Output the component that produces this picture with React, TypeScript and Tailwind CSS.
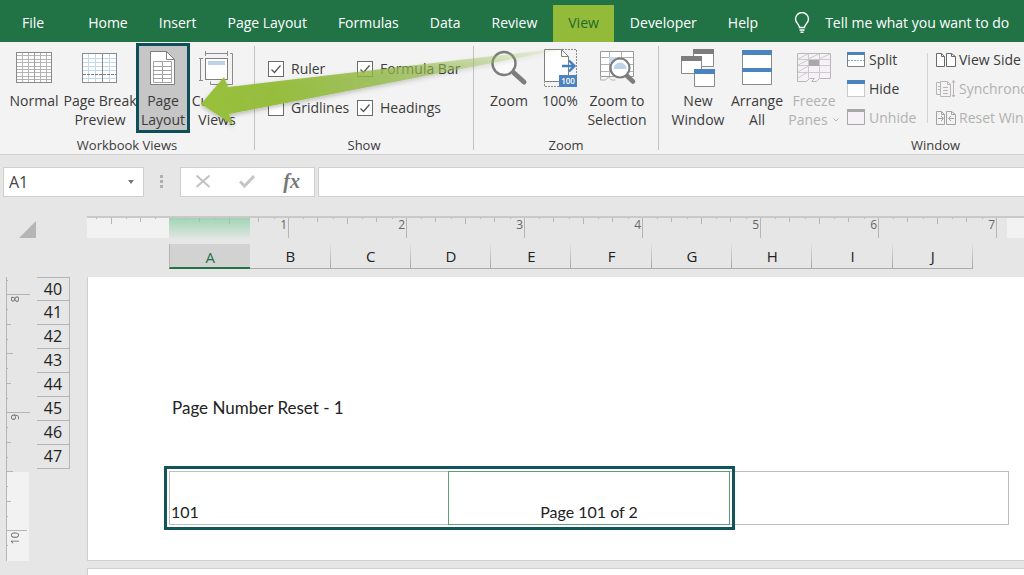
import React from 'react';

const tabs = ['File', 'Home', 'Insert', 'Page Layout', 'Formulas', 'Data', 'Review', 'View', 'Developer', 'Help'];
const columns = ['A', 'B', 'C', 'D', 'E', 'F', 'G', 'H', 'I', 'J'];
const rows = [40, 41, 42, 43, 44, 45, 46, 47];
const inches = [1, 2, 3, 4, 5, 6, 7];

const Icon = ({ children }: { children: React.ReactNode }) => (
  <svg viewBox="0 0 40 40" className="h-10 w-10 shrink-0" fill="none" aria-hidden="true">
    {children}
  </svg>
);

const NormalIcon = () => (
  <Icon>
    <rect x="2.5" y="4.5" width="35" height="30" fill="#fff" stroke="#8a8a8a" />
    <path
      d="M8.5 5v29M14.5 5v29M26.5 5v29M32.5 5v29M3 7.5h34M3 11.5h34M3 14.5h34M3 18.5h34M3 21.5h34M3 24.5h34M3 28.5h34M3 31.5h34"
      stroke="#b4b4b4"
    />
    <path d="M20.5 5v29" stroke="#a0a0a0" />
  </Icon>
);

const PageBreakIcon = () => (
  <Icon>
    <rect x="2.5" y="5.5" width="34" height="29" fill="#fff" stroke="#8a8a8a" />
    <path d="M8.5 6v28M15.5 6v28M29.5 6v28M3 10.5h33M3 14.5h33M3 18.5h33M3 22.5h33M3 30.5h33" stroke="#c3d8ea" />
    <path d="M22.5 6v28" stroke="#8a8a8a" />
    <path d="M3 26.5h33" stroke="#7d7d7d" strokeDasharray="3 1" />
  </Icon>
);

const PageLayoutIcon = () => (
  <Icon>
    <path d="M7.5 3.5h16l8 8v25h-24z" fill="#fff" stroke="#808080" />
    <path d="M23.5 3.5v8h8" stroke="#808080" />
    <path
      d="M10.5 13.5h18v21h-18zM19.5 13.5v21M10.5 18.5h18M10.5 22.5h18M10.5 26.5h18M10.5 30.5h18"
      stroke="#a3a3a3"
    />
  </Icon>
);

const CustomViewsIcon = () => (
  <Icon>
    <path d="M8 5.5h23M8.5 3v5M30.5 3v5M2 10.5h4M2 32.5h4M3.500 11v21M33 5.500h2.500v31h-22v-3" stroke="#8a8a8a" />
    <rect x="8.5" y="10.5" width="22" height="21" fill="#fff" stroke="#808080" />
    <rect x="11" y="13" width="17" height="4" fill="#bdd3e8" />
  </Icon>
);

const ZoomIcon = () => (
  <Icon>
    <path d="M25 25l10 9" stroke="#7d7d7d" strokeWidth="5" strokeLinecap="round" />
    <circle cx="15" cy="15.500" r="11.500" fill="#fafafa" stroke="#7d7d7d" strokeWidth="2.400" />
  </Icon>
);

const HundredIcon = () => (
  <Icon>
    <path d="M22 1.500h14.500v37H4.500V34" stroke="#8a8a8a" strokeDasharray="2 1" />
    <path d="M4.500 1.500h17l7 7v25h-24z" fill="#fff" stroke="#808080" />
    <path d="M21.500 1.500v7h7" stroke="#808080" />
    <path d="M22 18h12M29 12.500l5.500 5.500-5.500 5.500" stroke="#3f7fc0" strokeWidth="2.400" />
    <rect x="19" y="27" width="18" height="12" fill="#4a83bd" />
    <text x="28" y="36" fontSize="8" fontWeight="600" fill="#fff" textAnchor="middle">100</text>
  </Icon>
);

const ZoomSelectionIcon = () => (
  <Icon>
    <path d="M3.500 3.500h33v25h-33z" fill="#fff" stroke="#9a9a9a" />
    <path d="M12.500 4v24M24.500 4v24M4 9.500h32M4 16.500h32M4 23.500h32M3.500 28v4h5l3-3 3 3h4" stroke="#b0b0b0" />
    <path d="M12 9h8v6h-8z" fill="#c9dbec" />
    <path d="M29 27l7 6.500" stroke="#7d7d7d" strokeWidth="4.500" strokeLinecap="round" />
    <circle cx="23" cy="20" r="9.500" fill="#fff" stroke="#7d7d7d" strokeWidth="2.200" />
    <path d="M16.500 21a6.500 6.500 0 0 1 13 0z" fill="#bdd3e8" />
  </Icon>
);

const NewWindowIcon = () => (
  <Icon>
    <path d="M15.500 1.500h20v17h-20z" fill="#fff" stroke="#8a8a8a" />
    <path d="M15 1h21v5H15z" fill="#7d7d7d" />
    <path d="M3.500 9.500h20v16h-20z" fill="#fff" stroke="#8a8a8a" />
    <path d="M3 8h21v5H3z" fill="#7d7d7d" />
    <path d="M16.500 22.500h20v16h-20z" fill="#fff" stroke="#8a8a8a" />
    <path d="M16 21h21v5H16z" fill="#4a83bd" />
  </Icon>
);

const ArrangeIcon = () => (
  <Icon>
    <path d="M5.500 2.500h29v34h-29z" fill="#fff" stroke="#8a8a8a" />
    <path d="M5 2h30v5H5zM5 20h30v4H5z" fill="#4a83bd" />
  </Icon>
);

const FreezeIcon = () => (
  <Icon>
    <path d="M3.500 5.500h33v25h-11l-3 3h-5l3-3h-5l-3 3h-9z" fill="#f6f1f6" stroke="#b8b8b8" />
    <path
      d="M14.500 6v24M25.500 6v24M4 11.500h32M4 17.500h32M4 24.500h32M4 11l10-5M14 11l11-5M25 11l11-5M4 17l10-5M4 24l10-6M4 30l10-6"
      stroke="#cbcbcb"
    />
    <path d="M15 12h10v6H15z" fill="#a8a8a8" />
  </Icon>
);

const SmallIcon = ({ children }: { children: React.ReactNode }) => (
  <svg viewBox="0 0 20 18" className="h-[18px] w-5 shrink-0" fill="none" aria-hidden="true">
    {children}
  </svg>
);

interface BigButtonProps {
  icon: React.ReactNode;
  lines: string[];
  width: string;
  active?: boolean;
  disabled?: boolean;
  menu?: boolean;
}

const BigButton = ({ icon, lines, width, active, disabled, menu }: BigButtonProps) => (
  <button
    disabled={disabled}
    className={`flex h-[90px] shrink-0 flex-col items-center whitespace-nowrap leading-5 ${width} ${
      active ? 'border-3 border-[#0f4f58] bg-[#c6c6c6] pt-[2px]' : 'pt-[5px]'
    } ${disabled ? 'text-[#b1b1b1]' : ''}`}
  >
    {icon}
    <span className="mt-[3px]">{lines[0]}</span>
    {lines[1] && (
      <span className="-mt-px flex items-center gap-1">
        {lines[1]}
        {menu && (
          <svg viewBox="0 0 8 6" className="h-[6px] w-2" fill="none" aria-hidden="true">
            <path d="M1.500 1.500L4 4l2.500-2.500" stroke="#b1b1b1" />
          </svg>
        )}
      </span>
    )}
  </button>
);

interface GroupProps {
  label: string;
  width: string;
  children: React.ReactNode;
}

const Group = ({ label, width, children }: GroupProps) => (
  <section aria-label={label} className={`flex shrink-0 ${width}`}>
    <div className="flex min-w-0 flex-1 flex-col">
      <div className="flex h-[94px] items-start pt-px">{children}</div>
      <div className="text-center text-[13px] leading-[18px]">{label}</div>
    </div>
    <div className="mt-1 mb-1 w-px bg-[#c3c3c3]" />
  </section>
);

const Check = ({ label, checked }: { label: string; checked?: boolean }) => (
  <label className="flex h-5 items-center gap-[7px] whitespace-nowrap">
    <span className="grid h-4 w-4">
      <input
        type="checkbox"
        defaultChecked={checked}
        className="peer col-start-1 row-start-1 h-4 w-4 appearance-none border border-[#6a6a6a] bg-white"
      />
      <svg viewBox="0 0 16 16" className="pointer-events-none col-start-1 row-start-1 hidden h-4 w-4 peer-checked:block" fill="none">
        <path d="M3.500 8.500l3 3 6-7" stroke="#555" strokeWidth="1.300" />
      </svg>
    </span>
    {label}
  </label>
);

interface SmallButtonProps {
  icon: React.ReactNode;
  label: string;
  disabled?: boolean;
}

const SmallButton = ({ icon, label, disabled }: SmallButtonProps) => (
  <button disabled={disabled} className={`flex h-5 items-center gap-[3px] whitespace-nowrap ${disabled ? 'text-[#b1b1b1]' : ''}`}>
    <SmallIcon>{icon}</SmallIcon>
    {label}
  </button>
);

const Tabs = () => (
  <nav className="flex h-[42px] items-end gap-px overflow-hidden bg-[#217346] pl-[7px] text-white">
    {tabs.map((tab) => (
      <button
        key={tab}
        className={`h-[37px] shrink-0 whitespace-nowrap px-[15px] pb-px ${tab === 'File' ? 'mr-[13px]' : ''} ${
          tab === 'View' ? 'bg-[#94ba39] text-[#1d6b2f]' : ''
        }`}
      >
        {tab}
      </button>
    ))}
    <button className="ml-5 flex h-[37px] shrink-0 items-center gap-[15px] whitespace-nowrap pb-px">
      <svg viewBox="0 0 16 22" className="h-[22px] w-4" fill="none" stroke="#fff" strokeWidth="1.400" aria-hidden="true">
        <path d="M5.500 15.500c0-3-4-4.500-4-8.500a6.500 6.500 0 0 1 13 0c0 4-4 5.500-4 8.500zM5.500 18h5M6.500 20.300h3" />
      </svg>
      Tell me what you want to do
    </button>
  </nav>
);

const Ribbon = () => (
  <div className="relative flex h-[113px] overflow-hidden border-b border-[#d2d2d2] bg-[#f3f3f3] text-[#3b3b3b]">
    <Group label="Workbook Views" width="w-[255px]">
      <div className="flex pl-1">
        <BigButton icon={<NormalIcon />} lines={['Normal']} width="w-[60px]" />
        <BigButton icon={<PageBreakIcon />} lines={['Page Break', 'Preview']} width="w-[72px]" />
        <BigButton icon={<PageLayoutIcon />} lines={['Page', 'Layout']} width="w-[54px]" active />
        <BigButton icon={<CustomViewsIcon />} lines={['Custom', 'Views']} width="w-[54px]" />
      </div>
    </Group>
    <Group label="Show" width="w-[219px]">
      <div className="grid grid-cols-[89px_auto] gap-y-[19px] pt-4 pl-[13px]">
        <Check label="Ruler" checked />
        <Check label="Formula Bar" checked />
        <Check label="Gridlines" />
        <Check label="Headings" checked />
      </div>
    </Group>
    <Group label="Zoom" width="w-[185px]">
      <div className="flex pl-2">
        <BigButton icon={<ZoomIcon />} lines={['Zoom']} width="w-[54px]" />
        <BigButton icon={<HundredIcon />} lines={['100%']} width="w-[48px]" />
        <BigButton icon={<ZoomSelectionIcon />} lines={['Zoom to', 'Selection']} width="w-[66px]" />
      </div>
    </Group>
    <Group label="Window" width="w-[554px]">
      <div className="flex pl-[10px]">
        <BigButton icon={<NewWindowIcon />} lines={['New', 'Window']} width="w-[58px]" />
        <BigButton icon={<ArrangeIcon />} lines={['Arrange', 'All']} width="w-[60px]" />
        <BigButton icon={<FreezeIcon />} lines={['Freeze', 'Panes']} width="w-[54px]" disabled menu />
      </div>
      <div className="flex w-[86px] flex-col gap-[9px] pt-[7px] pl-[5px]">
        <SmallButton
          label="Split"
          icon={
            <>
              <path d="M1.500 1.500h17v14h-17z" fill="#fff" stroke="#808080" />
              <path d="M1 1h18v3H1z" fill="#4a83bd" />
              <path d="M2 9.500h16" stroke="#7fa8d4" strokeDasharray="2 1" />
            </>
          }
        />
        <SmallButton
          label="Hide"
          icon={
            <>
              <path d="M1.500 1.500h17v15h-17z" fill="#fff" stroke="#9a9a9a" strokeDasharray="1 1" />
              <path d="M1 0h18v4H1z" fill="#4a83bd" />
            </>
          }
        />
        <SmallButton
          label="Unhide"
          disabled
          icon={
            <>
              <path d="M1.500 .500h17v15h-17z" fill="#f6f1f6" stroke="#a8a8a8" />
              <path d="M1 0h18v3H1z" fill="#a8a8a8" />
            </>
          }
        />
      </div>
      <div className="mt-[10px] h-[70px] w-px bg-[#d2d2d2]" />
      <div className="flex flex-col gap-[9px] pt-[7px] pl-2">
        <SmallButton
          label="View Side by Side"
          icon={<path d="M.500 2.500h5l3 3v10h-8zM5.500 2.500v3h3M10.500 2.500h5l4 3v10h-9zM15.500 2.500v3h4" fill="#fff" stroke="#6a6a6a" />}
        />
        <SmallButton
          label="Synchronous Scrolling"
          disabled
          icon={
            <path
              d="M4.500 2.500h-4v12h4M4.500 1.500h7l3 3v12h-10zM11.500 1.500v3h3M7 7.500h5M7 10.500h5M7 13.500h5M2 6.500h2M2 9.500h2M17.500 0v17M16 2.500L17.500 .500 19 2.500M16 15l1.500 2 1.500-2"
              stroke="#b8b4b8"
            />
          }
        />
        <SmallButton
          label="Reset Window Position"
          disabled
          icon={
            <path
              d="M.500 2.500h5l3 3v10h-8zM5.500 2.500v3h3M10.500 2.500h5l4 3v10h-9zM15.500 2.500v3h4M2 9.500h5M5 7l2.500 2.500L5 12M18 9.500h-5M15 7l-2.500 2.500L15 12"
              stroke="#a3a3a3"
            />
          }
        />
      </div>
    </Group>

    {/* Callout arrow from the View tab to Page Layout */}
    <svg viewBox="0 0 400 100" className="pointer-events-none absolute top-0 left-[195px] h-[100px] w-[400px]" aria-hidden="true">
      <defs>
        <linearGradient id="arrow" gradientUnits="userSpaceOnUse" x1="6" y1="62" x2="385" y2="5">
          <stop offset="0" stopColor="#98c03a" />
          <stop offset="0.2" stopColor="#95bd3a" stopOpacity="0.97" />
          <stop offset="0.5" stopColor="#92b945" stopOpacity="0.75" />
          <stop offset="1" stopColor="#9ac04a" stopOpacity="0" />
        </linearGradient>
        <filter id="shade" x="-5%" y="-10%" width="110%" height="130%">
          <feDropShadow dx="0" dy="2" stdDeviation="2" floodColor="#000" floodOpacity="0.25" />
        </filter>
      </defs>
      <path d="M6 62L29 35l4 10L385 4 34 72l4 11z" fill="url(#arrow)" filter="url(#shade)" />
    </svg>
  </div>
);

const FormulaBar = () => (
  <div className="flex h-[30px] text-[#444]">
    <div className="ml-[3px] flex w-[141px] items-center border border-[#cfcfcf] bg-white pl-[5px]">
      <input aria-label="Name Box" defaultValue="A1" className="min-w-0 flex-1 text-base outline-none" />
      <button aria-label="Name list" className="flex h-full w-6 items-center justify-center">
        <svg viewBox="0 0 6 4" className="h-1 w-[6px]" aria-hidden="true">
          <path d="M0 0h6L3 4z" fill="#777" />
        </svg>
      </button>
    </div>
    <svg viewBox="0 0 36 30" className="h-[30px] w-9 shrink-0" fill="#b0b0b0" aria-hidden="true">
      <path d="M16 8h3v3h-3zM16 13h3v3h-3zM16 18h3v3h-3z" />
    </svg>
    <div className="flex w-[135px] items-center justify-around border border-[#cfcfcf] bg-white">
      <button aria-label="Cancel">
        <svg viewBox="0 0 16 16" className="h-4 w-4" stroke="#c2c2c2" strokeWidth="2" aria-hidden="true">
          <path d="M1.500 1.500l13 11.500M14.500 1.500L1.500 13" />
        </svg>
      </button>
      <button aria-label="Enter">
        <svg viewBox="0 0 16 16" className="h-4 w-4" fill="none" stroke="#c6c6c6" strokeWidth="3" aria-hidden="true">
          <path d="M1 7.500l4.500 4.500L15 2" />
        </svg>
      </button>
      <button
        aria-label="Insert Function"
        className="pb-[2px] font-['Liberation_Serif',serif] text-xl leading-5 font-bold text-[#777] italic"
      >
        fx
      </button>
    </div>
    <input aria-label="Formula Bar" className="ml-[3px] min-w-0 flex-1 border border-r-0 border-[#cfcfcf] bg-white px-2 outline-none" />
  </div>
);

const HorizontalRuler = () => (
  <div className="flex h-[22px] overflow-hidden border-t-2 border-[#c9c9c9] text-xs text-[#666]">
    <div className="w-[82px] shrink-0 bg-[#f2f2f2]">
      <svg viewBox="0 0 82 21" className="h-[21px] w-[82px]" stroke="#b5b5b5" aria-hidden="true">
        <path d="M9.500 0v1M24.500 0v6M39.500 0v1M53.500 0v4M68.500 0v1" />
      </svg>
    </div>
    {inches.map((n) => (
      <div
        key={n}
        className={`grid shrink-0 justify-end ${
          n === 1
            ? 'w-[120px] bg-[linear-gradient(to_bottom,#a0d4b5,#dfe6e1)] bg-[length:81px_100%] bg-no-repeat'
            : 'w-[118px]'
        }`}
      >
        <svg viewBox="0 0 118 21" className="col-start-1 row-start-1 h-[21px] w-[118px]" stroke="#b5b5b5" aria-hidden="true">
          <path d="M14.500 0v1M44.500 0v1M73.500 0v1M103.500 0v1M28.500 0v4M87.500 0v4M58.500 0v6M117.500 0v21" />
        </svg>
        <span className="col-start-1 row-start-1 pr-[2px] text-right leading-[14px]">{n}</span>
      </div>
    ))}
    <div className="w-[10px] shrink-0" />
    <div className="flex-1 bg-[#f2f2f2]" />
  </div>
);

const ColumnHeadings = () => (
  <div className="mt-[6px] ml-[82px] flex h-[25px] w-[804px] text-[15px] text-[#222]">
    {columns.map((c) => (
      <button
        key={c}
        className={
          c === 'A'
            ? 'flex-1 border-b-2 border-l border-b-[#217346] border-l-[#b5b5b5] bg-[#d2d2d2] pt-[3px] text-[#217346]'
            : 'flex-1 border-b border-[#ababab] bg-[linear-gradient(to_bottom,#e0e0e0,#a5a5a5)] bg-[length:1px_100%] bg-right bg-no-repeat pt-[2px]'
        }
      >
        {c}
      </button>
    ))}
  </div>
);

const VerticalRuler = () => (
  <div className="ml-[6px] flex h-[284px] w-[23px] shrink-0 flex-col border-l border-[#b5b5b5] bg-[linear-gradient(to_bottom,transparent_195px,#f2f2f2_195px)] text-[11px] text-[#666]">
    <svg viewBox="0 0 23 17" className="h-[17px] w-[23px] shrink-0" stroke="#b5b5b5" aria-hidden="true">
      <path d="M0 3.500h1" />
    </svg>
    {[8, 9, 10].map((n) => (
      <div key={n} className="grid h-[118px] shrink-0">
        <svg viewBox="0 0 23 118" className="col-start-1 row-start-1 h-[118px] w-[23px]" stroke="#b5b5b5" aria-hidden="true">
          <path
            d={
              n === 10
                ? 'M0 .500h20M0 15.500h1'
                : 'M0 .500h23M0 15.500h1M0 30.500h4M0 45.500h1M0 59.500h6M0 74.500h1M0 89.500h4M0 104.500h1'
            }
          />
        </svg>
        <span className="col-start-1 row-start-1 mt-[2px] rotate-180 self-start justify-self-start leading-[15px] [writing-mode:vertical-rl]">
          {n}
        </span>
      </div>
    ))}
  </div>
);

const RowHeadings = () => (
  <div className="ml-2 flex w-[33px] shrink-0 flex-col self-start border-r border-[#b5b5b5] text-base text-[#222]">
    {rows.map((r) => (
      <button key={r} className="h-6 border-b border-[#b5b5b5] pb-px leading-[22px] first:border-t">
        {r}
      </button>
    ))}
  </div>
);

const Sheet = () => (
  <div className="mt-2 flex">
    <VerticalRuler />
    <RowHeadings />
    <main className="ml-[17px] flex min-w-0 flex-1 flex-col font-[Lato,sans-serif] text-base text-[#222]">
      <div className="flex h-[284px] flex-col border-b border-l border-[#d0d0d0] bg-white pt-[119px] pl-[81px]">
        <p className="pl-[3px] text-[17px] leading-6">Page Number Reset - 1</p>
        <div className="mt-[51px] mr-[15px] flex h-[54px]">
          <div className="relative flex flex-[562]">
            <div className="flex flex-[279] items-end border border-r-0 border-[#bdbdbd] pl-px leading-6">101</div>
            <div className="flex flex-[283] items-end justify-center border border-[#5f9f78] leading-6">Page 101 of 2</div>
            <div className="pointer-events-none absolute -inset-[5px] border-3 border-[#12545c]" />
          </div>
          <div className="flex-[278] border border-l-0 border-[#bdbdbd]" />
        </div>
      </div>
      <div className="mt-[7px] h-10 border-t border-l border-[#d0d0d0] bg-white" />
    </main>
  </div>
);

const App = () => (
  <div className="h-screen overflow-hidden bg-[#e6e6e6] font-['Open_Sans',sans-serif] text-sm">
    <Tabs />
    <Ribbon />
    <div className="pt-3">
      <FormulaBar />
    </div>
    <div className="mt-[19px] flex items-start">
      <button aria-label="Select All" className="flex w-[87px] shrink-0 pt-[5px] pl-[19px]">
        <svg viewBox="0 0 17 17" className="h-[17px] w-[17px]" aria-hidden="true">
          <path d="M17 0v17H0z" fill="#b5b5b5" />
        </svg>
      </button>
      <div className="min-w-0 flex-1">
        <HorizontalRuler />
        <ColumnHeadings />
      </div>
    </div>
    <Sheet />
  </div>
);

export default App;
